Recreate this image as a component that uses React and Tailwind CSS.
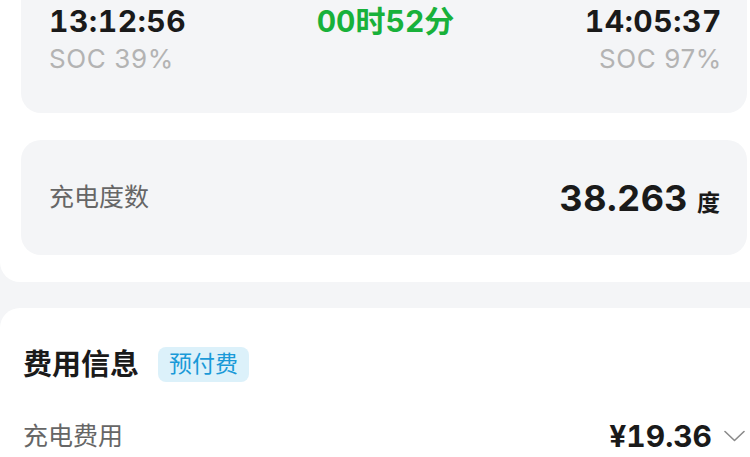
export default function App() {
  return (
    <div className="w-[750px] h-[457px] overflow-hidden bg-[#f4f5f7] font-['Inter','Noto_Sans_CJK_SC',sans-serif]">
      <div className="w-[768px] bg-white rounded-b-[20px] px-[21px] pb-[27px]">
        <div className="rounded-b-[20px] bg-[#f4f5f7] pt-[3px] pb-[38px] pl-[28px] pr-[25px]">
          <div className="grid grid-cols-3">
            <div className="flex flex-col items-start">
              <div className="text-[30px] leading-[36px] font-bold text-[#1a1a1a] tabular-nums tracking-[0.6px]">13:12:56</div>
              <div className="mt-[4px] text-[26px] leading-[32px] text-[#b3b3b3] tracking-[0.6px]">SOC 39%</div>
            </div>
            <div className="flex justify-center">
              <div className="text-[30px] leading-[36px] font-bold text-[#18b13a] tabular-nums">00时52分</div>
            </div>
            <div className="flex flex-col items-end">
              <div className="text-[30px] leading-[36px] font-bold text-[#1a1a1a] tabular-nums tracking-[0.6px]">14:05:37</div>
              <div className="mt-[4px] text-[26px] leading-[32px] text-[#b3b3b3] tracking-[0.6px]">SOC 97%</div>
            </div>
          </div>
        </div>
        <div className="mt-[27px] h-[115px] rounded-[20px] bg-[#f4f5f7] pl-[28px] pr-[27px] flex items-center justify-between">
          <div className="text-[25px] text-[#666666]">充电度数</div>
          <div className="flex items-baseline gap-[9px]">
            <span className="text-[36px] font-bold text-[#1a1a1a] tabular-nums tracking-[0.4px]">38.263</span>
            <span className="text-[23px] font-bold text-[#1a1a1a]">度</span>
          </div>
        </div>
      </div>
      <div className="mt-[26px] w-[768px] h-[200px] bg-white rounded-t-[20px] px-[23px] pt-[39px]">
        <div className="flex items-center gap-[19px]">
          <div className="text-[29px] leading-[35px] font-bold text-[#1a1a1a]">费用信息</div>
          <div className="h-[35px] px-[11px] rounded-[8px] bg-[#dcf1fa] flex items-center text-[23px] text-[#1a9ad8]">预付费</div>
        </div>
        <div className="mt-[37px] flex items-center justify-between">
          <div className="text-[25px] leading-[32px] text-[#666666]">充电费用</div>
          <div className="flex items-center gap-[12px]">
            <span className="text-[30px] leading-[34px] font-bold text-[#1a1a1a] tabular-nums">¥19.36</span>
            <svg width="21" height="12" viewBox="0 0 21 12" fill="none">
              <path d="M1 1.5 L10.5 10.5 L20 1.5" stroke="#8a8a8a" strokeWidth="1.6" strokeLinecap="round" strokeLinejoin="round" />
            </svg>
          </div>
        </div>
      </div>
    </div>
  );
}
